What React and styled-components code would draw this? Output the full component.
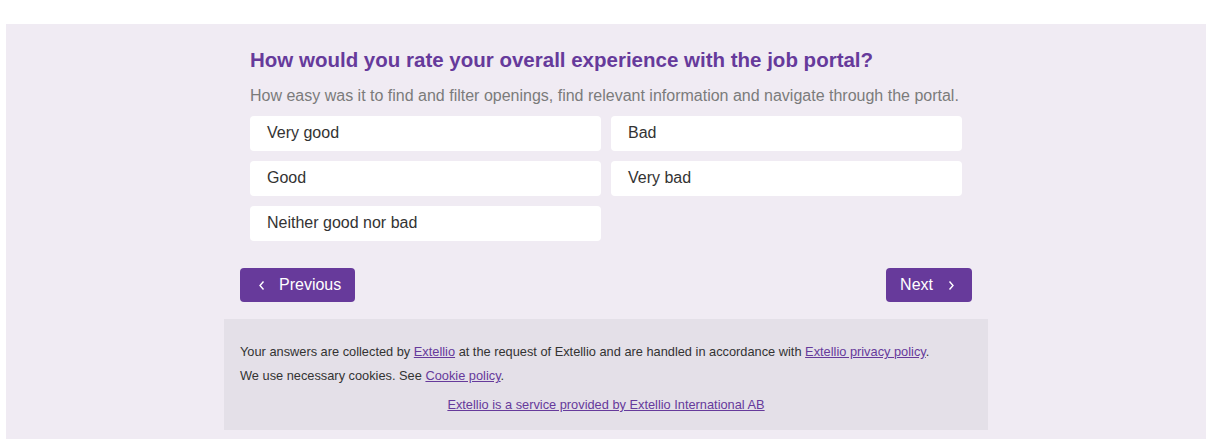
import React from "react";
import styled, { createGlobalStyle } from "styled-components";

const GlobalStyle = createGlobalStyle`
  body {
    margin: 0;
    background: #ffffff;
    font-family: "Liberation Sans", Arial, sans-serif;
  }
`;

const Panel = styled.div`
  margin: 24px 7px 0 6px;
  padding: 24px 0 9px;
  background: #f0ebf3;
`;

const Column = styled.div`
  width: 764px;
  margin: 0 auto;
`;

const Question = styled.div`
  padding: 0 26px;
`;

const Title = styled.h1`
  margin: 0;
  font-size: 20.5px;
  line-height: 23px;
  font-weight: bold;
  color: #663a9b;
`;

const Subtitle = styled.p`
  margin: 16px 0 11px;
  font-size: 16px;
  line-height: 18px;
  color: #7b7b7b;
`;

const Options = styled.div`
  display: grid;
  grid-template-columns: 351px 351px;
  column-gap: 10px;
  row-gap: 10px;
`;

const Option = styled.div`
  box-sizing: border-box;
  height: 35px;
  display: flex;
  align-items: center;
  padding: 0 0 2px 17px;
  background: #ffffff;
  border-radius: 4px;
  font-size: 16px;
  color: #333333;
`;

const Nav = styled.div`
  display: flex;
  justify-content: space-between;
  padding: 27px 16px 17px;
`;

const NavButton = styled.button`
  display: flex;
  align-items: center;
  gap: ${(p) => (p.$left ? "13px" : "14px")};
  height: 34px;
  padding: ${(p) => (p.$left ? "0 14px 0 18px" : "0 17px 0 14px")};
  border: none;
  border-radius: 4px;
  background: #673a9b;
  color: #ffffff;
  font-family: "Liberation Sans", Arial, sans-serif;
  font-size: 16px;
  cursor: pointer;

  svg {
    width: 8px;
    height: 11px;
  }
`;

const Footer = styled.div`
  background: #e4e0e8;
  padding: 21px 16px 13px;
  font-size: 12.8px;
  line-height: 24px;
  color: #333333;
`;

const Line = styled.div``;

const Credit = styled.div`
  margin-top: 5px;
  text-align: center;
`;

const Link = styled.a`
  color: #663a9b;
  text-decoration: underline;
`;

const Chevron = ({ dir }) => (
  <svg viewBox="0 0 8 11" fill="none" stroke="#ffffff" strokeWidth="1.4">
    {dir === "left" ? (
      <polyline points="5.5,1.5 2,5.5 5.5,9.5" />
    ) : (
      <polyline points="2.5,1.5 6,5.5 2.5,9.5" />
    )}
  </svg>
);

const options = ["Very good", "Bad", "Good", "Very bad", "Neither good nor bad"];

export default function App() {
  return (
    <>
      <GlobalStyle />
      <Panel>
        <Column>
          <Question>
            <Title>How would you rate your overall experience with the job portal?</Title>
            <Subtitle>
              How easy was it to find and filter openings, find relevant information and navigate through the portal.
            </Subtitle>
            <Options>
              {options.map((o) => (
                <Option key={o}>{o}</Option>
              ))}
            </Options>
          </Question>
          <Nav>
            <NavButton $left>
              <Chevron dir="left" />
              Previous
            </NavButton>
            <NavButton>
              Next
              <Chevron dir="right" />
            </NavButton>
          </Nav>
          <Footer>
            <Line>
              Your answers are collected by <Link href="#">Extellio</Link> at the request of Extellio and are handled
              in accordance with <Link href="#">Extellio privacy policy</Link>.
            </Line>
            <Line>
              We use necessary cookies. See <Link href="#">Cookie policy</Link>.
            </Line>
            <Credit>
              <Link href="#">Extellio is a service provided by Extellio International AB</Link>
            </Credit>
          </Footer>
        </Column>
      </Panel>
    </>
  );
}
